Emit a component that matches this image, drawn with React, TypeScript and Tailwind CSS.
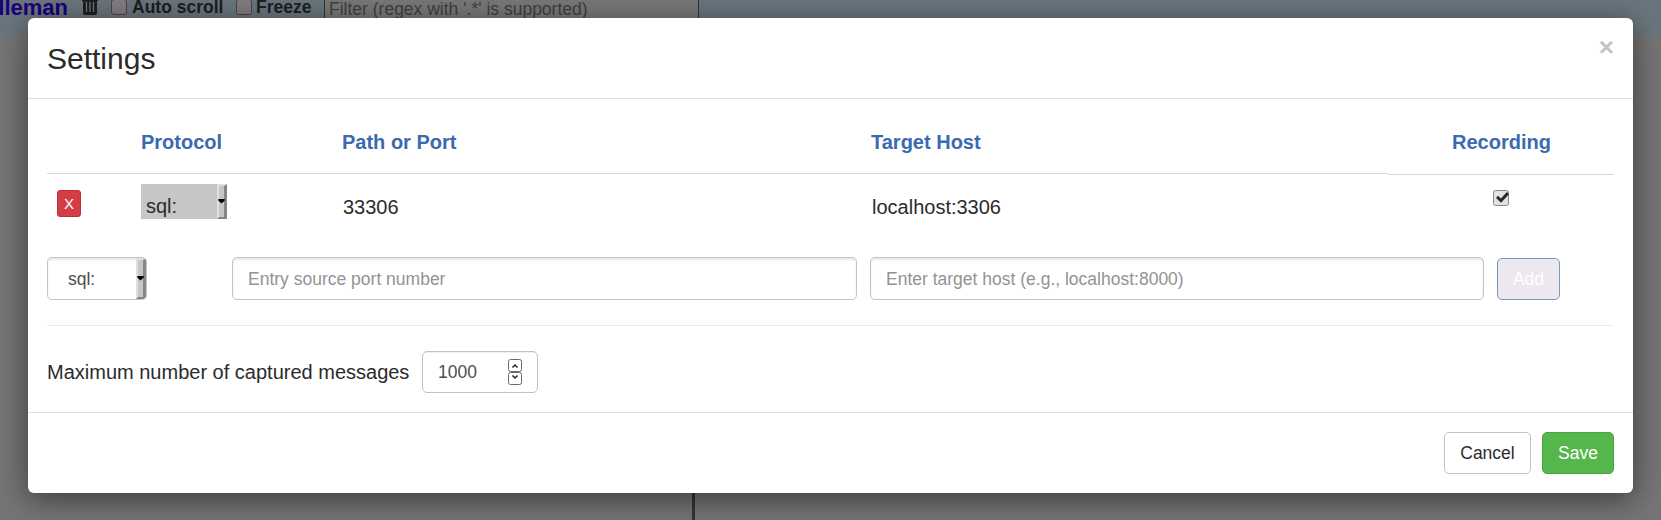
import React from "react";

function TrashIcon() {
  return (
    <svg className="block h-[18px] w-4" viewBox="0 0 16 18" fill="none">
      <path d="M0 2h16v2H0z M5 0h6v2H5z" fill="#1c1e20" />
      <path d="M1 4h14v12q0 2-2 2H3q-2 0-2-2z" fill="#1c1e20" />
      <path d="M4.5 5v10M8 5v10M11.5 5v10" stroke="#6c777f" strokeWidth="1.3" />
    </svg>
  );
}

function CheckMark() {
  return (
    <svg className="block h-4 w-4" viewBox="0 0 16 16" fill="none">
      <rect x="0.5" y="0.5" width="15" height="15" rx="2" fill="#e4e2e4" stroke="#8a888a" />
      <path d="M4 6.8L8 10.6L15 3" stroke="#2b2b2b" strokeWidth="3" />
    </svg>
  );
}

function ArrowStrip() {
  return (
    <span className="flex w-[10px] shrink-0 items-center justify-center border-t-2 border-r-[3px] border-b-2 border-l-2 border-t-[#e0e0e0] border-r-[#868686] border-b-[#868686] border-l-[#e0e0e0] bg-[#c6c6c6]">
      <svg className="block h-[5px] w-[7px] shrink-0" viewBox="0 0 7 5">
        <path d="M0.3 0h6.4v1.6L3.5 4.6L0.3 1.6z" fill="#000" />
      </svg>
    </span>
  );
}

function TopBar() {
  return (
    <div className="flex h-[35px] items-start overflow-hidden bg-[#6a757d]">
      <div className="flex h-[35px] w-[68px] shrink-0 justify-end overflow-hidden text-[22px] leading-[16px] font-bold text-[#1b007b]">
        Middleman
      </div>
      <div className="-mt-[3px] ml-[14px]">
        <TrashIcon />
      </div>
      <span className="-mt-px ml-[13px] h-4 w-4 rounded-[3px] border border-[#484546] bg-[#827c80]" />
      <span className="ml-[5px] w-[104px] text-[17.5px] leading-[15px] font-bold whitespace-nowrap text-[#1c1e1f]">Auto scroll</span>
      <span className="-mt-px h-4 w-4 rounded-[3px] border border-[#484546] bg-[#827c80]" />
      <span className="ml-[4px] w-[68px] text-[17.5px] leading-[15px] font-bold text-[#1c1e1f]">Freeze</span>
      <span className="h-[28px] w-[375px] border-x border-[#303030] bg-[#787977] pl-[4px] text-[17.5px] leading-[19px] whitespace-nowrap text-[#404040]">
        Filter (regex with '.*' is supported)
      </span>
    </div>
  );
}

const inputClass =
  "block h-[43px] rounded-[5px] border border-[#c4c2c4] bg-white px-[15px] pt-[2px] text-[17.5px] text-[#4d4d4d] shadow-[inset_0_2px_2px_rgba(60,20,60,0.1)] outline-none placeholder:text-[#949294] placeholder:opacity-100";

export default function App() {
  return (
    <div className="relative h-[520px] w-full overflow-hidden bg-[#767576] font-['Liberation_Sans',Arial,sans-serif] text-[20px] text-[#2b2b2b]">
      <TopBar />
      <div className="ml-[692px] h-[485px] w-[3px] bg-[#343434]" />

      <div className="absolute inset-0 px-7 pt-[18px]">
        <div className="flex h-[475px] w-[1605px] flex-col rounded-[6px] bg-white shadow-[0_6px_30px_rgba(0,0,0,0.5)]">
          <header className="flex h-[81px] shrink-0 items-start justify-between border-b border-[#e0e0e0] pt-[20px] pr-[19px] pl-[19px]">
            <h4 className="text-[30px] leading-[42px]">Settings</h4>
            <button className="-mt-[8px] text-[26px] leading-[34px] font-bold text-[#c4c2c4]">×</button>
          </header>

          <main className="px-[19px]">
            <div className="flex text-[20px] leading-[28px] font-bold text-[#3a6ab0]">
              <div className="h-[75px] w-[84px] border-b border-[#d8d8d8]" />
              <div className="h-[75px] w-[201px] border-b border-[#d8d8d8] pt-[29px] pl-[10px]">Protocol</div>
              <div className="h-[75px] w-[529px] border-b border-[#d8d8d8] pt-[29px] pl-[10px]">Path or Port</div>
              <div className="h-[75px] w-[528px] border-b border-[#d8d8d8] pt-[29px] pl-[10px]">Target Host</div>
              <div className="h-[76px] w-[225px] border-b border-[#d8d8d8] pt-[29px] text-center">Recording</div>
            </div>

            <div className="flex h-[82px] items-start">
              <div className="w-[84px] pt-[15px] pl-[10px]">
                <button className="block h-[27px] w-[24px] rounded-[3px] border border-[#c42a35] bg-[#d33d45] text-[15px] leading-[25px] text-white">
                  X
                </button>
              </div>
              <div className="w-[201px] pt-[9px] pl-[10px]">
                <div className="flex h-[35px] w-[86px] bg-[#c6c6c6]">
                  <span className="grow pt-[8px] pl-[5px] leading-[28px]">sql:</span>
                  <ArrowStrip />
                </div>
              </div>
              <div className="w-[529px] pt-[18px] pl-[11px] leading-[28px]">33306</div>
              <div className="w-[528px] pt-[18px] pl-[11px] leading-[28px]">localhost:3306</div>
              <div className="flex w-[223px] justify-center pt-[15px]">
                <CheckMark />
              </div>
            </div>

            <div className="flex items-start">
              <div className="flex h-[43px] w-[100px] overflow-hidden rounded-[5px] border border-[#c4c2c4] shadow-[inset_0_2px_2px_rgba(60,20,60,0.1)]">
                <span className="grow pl-[20px] text-[17.5px] leading-[43px] text-[#4d4d4d]">sql:</span>
                <ArrowStrip />
              </div>
              <input className={`${inputClass} ml-[85px] w-[625px]`} placeholder="Entry source port number" />
              <input className={`${inputClass} ml-[13px] w-[614px]`} placeholder="Enter target host (e.g., localhost:8000)" />
              <button className="mt-px ml-[13px] h-[42px] w-[63px] rounded-[5px] border border-[#6f9bc8] bg-[#ece8ed] text-[17.5px] text-white">
                Add
              </button>
            </div>

            <hr className="mt-[25px] border-[#ebebeb]" />

            <div className="mt-[25px] flex items-center">
              <label className="w-[375px] whitespace-nowrap">Maximum number of captured messages</label>
              <div className="flex h-[42px] w-[116px] items-center justify-between rounded-[5px] border border-[#c4c2c4] pr-[15px] pl-[15px] text-[17.5px] text-[#4d4d4d] shadow-[inset_0_1px_1px_rgba(60,20,60,0.07)]">
                <span>1000</span>
                <svg className="block h-[26px] w-[14px]" viewBox="0 0 14 26" fill="none">
                  <rect x="0.5" y="0.5" width="13" height="12" rx="2" stroke="#6a6a6a" />
                  <rect x="0.5" y="13.5" width="13" height="12" rx="2" stroke="#6a6a6a" />
                  <path d="M4.5 8.5L7 6L9.5 8.5M4.5 16.5L7 19L9.5 16.5" stroke="#222" strokeWidth="1.5" />
                </svg>
              </div>
            </div>
          </main>

          <footer className="mt-auto flex h-[81px] shrink-0 items-start justify-end gap-[11px] border-t border-[#e0e0e0] px-[19px] pt-[19px] text-[17.5px]">
            <button className="h-[42px] w-[87px] rounded-[5px] border border-[#c4c2c4] bg-white">Cancel</button>
            <button className="h-[42px] w-[72px] rounded-[5px] border border-[#45a83b] bg-[#55b74b] text-white">Save</button>
          </footer>
        </div>
      </div>
    </div>
  );
}
